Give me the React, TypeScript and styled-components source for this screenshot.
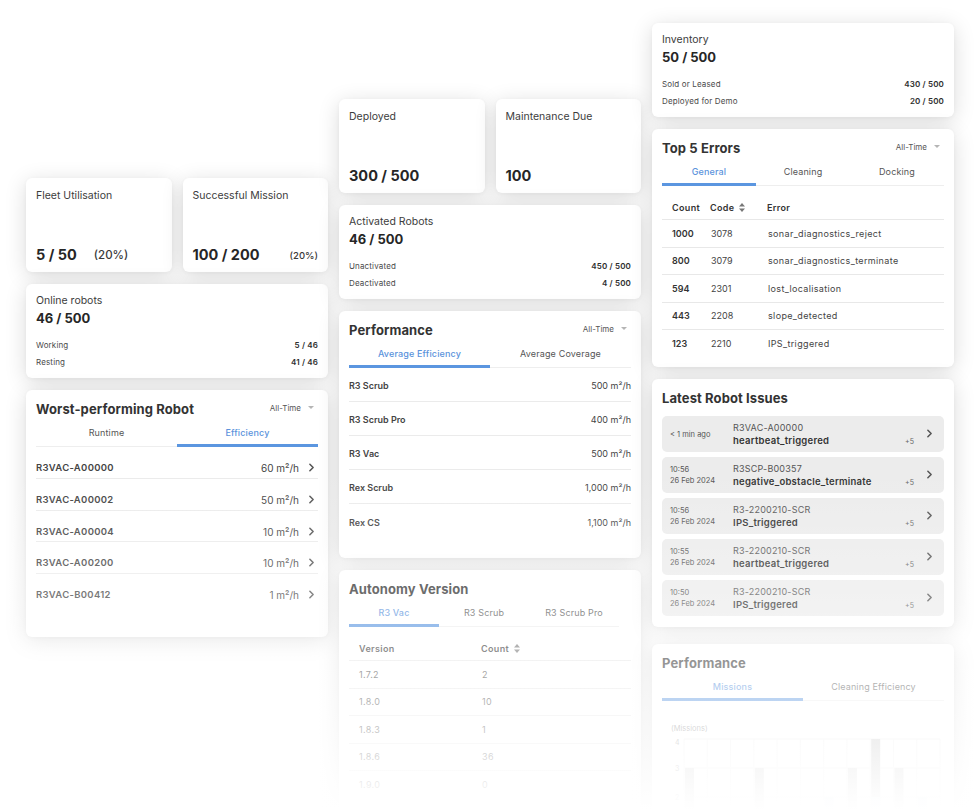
import React from "react";
import styled, { createGlobalStyle } from "styled-components";
import { ChevronRight } from "lucide-react";

const GlobalStyle = createGlobalStyle`
  html, body { margin: 0; padding: 0; background: #ffffff; }
  body { font-family: "Inter", "Noto Sans", sans-serif; color: #333; -webkit-font-smoothing: antialiased; }
  * { box-sizing: border-box; }
`;

const Page = styled.div`
  position: relative;
  width: 980px;
  height: 810px;
  overflow: hidden;
  display: flex;
  align-items: flex-start;
  gap: 11px;
  padding-left: 26px;
  background: #fff;
`;

const Column = styled.div<{ $top: number }>`
  width: 302px;
  flex: none;
  display: flex;
  flex-direction: column;
  gap: 12px;
  padding-top: ${(p) => p.$top}px;
`;

const Card = styled.div<{ $h?: number; $mt?: number }>`
  background: #fff;
  border-radius: 6px;
  box-shadow: 0 4px 22px rgba(0, 0, 0, 0.14), 0 1px 4px rgba(0, 0, 0, 0.04);
  height: ${(p) => (p.$h ? `${p.$h}px` : "auto")};
  margin-top: ${(p) => p.$mt ?? 0}px;
  padding: 10px;
  display: flex;
  flex-direction: column;
  overflow: hidden;
`;

const HalfRow = styled.div`
  display: grid;
  grid-template-columns: 1fr 1fr;
  gap: 11px;
`;

/* ---------- stat cards ---------- */
const StatCard = styled(Card)`
  height: 94px;
  justify-content: space-between;
  padding: 11px 10px 7px;
`;

const Label = styled.div`
  font-size: 10.5px;
  line-height: 14px;
  color: #3c3c3c;
`;

const StatValueRow = styled.div<{ $spread?: boolean }>`
  display: flex;
  align-items: center;
  justify-content: ${(p) => (p.$spread ? "space-between" : "flex-start")};
  gap: 17px;
`;

const BigValue = styled.div`
  font-size: 14.5px;
  line-height: 20px;
  font-weight: 700;
  color: #262626;
`;

const Percent = styled.span<{ $small?: boolean }>`
  font-size: ${(p) => (p.$small ? 9.5 : 11.5)}px;
  font-weight: 500;
  color: #3a3a3a;
`;

/* ---------- summary cards ---------- */
const SummaryCard = styled(Card)`
  height: 94px;
  padding: 10px 10px 8px;
`;

const SummaryValue = styled.div`
  font-size: 13px;
  line-height: 16px;
  font-weight: 700;
  color: #262626;
  margin-top: 2px;
  margin-bottom: 10px;
`;

const DetailRow = styled.div`
  display: flex;
  justify-content: space-between;
  align-items: center;
  height: 18.5px;
  font-size: 8px;
  letter-spacing: 0.15px;
  color: #4a4a4a;
  b {
    font-size: 8px;
    font-weight: 600;
    color: #2e2e2e;
  }
`;

/* ---------- panels ---------- */
const PanelHeader = styled.div`
  display: flex;
  justify-content: space-between;
  align-items: center;
  height: 16px;
  margin-top: 1px;
`;

const Title = styled.div`
  font-size: 13px;
  font-weight: 700;
  color: #333;
  letter-spacing: 0.1px;
`;

const RangeSelect = styled.div`
  display: flex;
  align-items: center;
  gap: 7px;
  font-size: 8px;
  color: #555;
  margin-right: 4px;
  margin-top: -3px;
  &::after {
    content: "";
    border-left: 3px solid transparent;
    border-right: 3px solid transparent;
    border-top: 3px solid #b5b5b5;
  }
`;

const TabBar = styled.div<{ $w?: number }>`
  display: flex;
  width: ${(p) => (p.$w ? `${p.$w}px` : "100%")};
  border-bottom: 1px solid #eeeeee;
  margin-top: 8px;
`;

const Tab = styled.div<{ $active?: boolean }>`
  flex: 1;
  text-align: center;
  font-size: 9px;
  letter-spacing: 0.15px;
  height: 22px;
  line-height: 16px;
  color: ${(p) => (p.$active ? "#5b93dc" : "#555")};
  font-weight: ${(p) => (p.$active ? 500 : 400)};
  border-bottom: 3px solid ${(p) => (p.$active ? "#5b96e0" : "transparent")};
  margin-bottom: -1px;
`;

const RobotRow = styled.div`
  display: flex;
  align-items: flex-start;
  height: 31.8px;
  padding-top: 15px;
  border-bottom: 1px solid #ebebeb;
  color: #444;
  &:last-child { border-bottom: none; }
`;

const RobotName = styled.div`
  flex: 1;
  font-size: 9.5px;
  font-weight: 600;
  line-height: 12px;
  letter-spacing: 0.3px;
`;

const RobotValue = styled.div`
  font-size: 10px;
  line-height: 12px;
  margin-right: 6px;
`;

const Chevron = styled(ChevronRight)`
  flex: none;
  color: #555;
  margin-top: -1px;
`;

const PerfRow = styled.div`
  display: flex;
  justify-content: space-between;
  align-items: center;
  height: 34px;
  padding-top: 2px;
  border-bottom: 1px solid #ebebeb;
  font-size: 9px;
  color: #444;
  &:last-child { border-bottom: none; }
  b { font-weight: 600; }
`;

const Table = styled.table`
  width: 100%;
  border-collapse: collapse;
  font-size: 9px;
  letter-spacing: 0.35px;
  color: #444;
  th {
    text-align: left;
    font-weight: 600;
    color: #333;
    height: 33px;
    padding: 16px 0 6px;
    vertical-align: top;
    border-bottom: 1px solid #e8e8e8;
  }
  td {
    height: 27.5px;
    border-bottom: 1px solid #e8e8e8;
    vertical-align: middle;
  }
  tr:last-child td { border-bottom: none; }
  th:first-child, td:first-child { padding-left: 10px; }
`;

const SortIcon = () => (
  <svg width="6" height="9" viewBox="0 0 6 9" style={{ marginLeft: 5, verticalAlign: "-1px" }}>
    <path d="M3 0 L6 3.5 H0 Z" fill="#777" />
    <path d="M3 9 L6 5.5 H0 Z" fill="#777" />
  </svg>
);

/* ---------- issues ---------- */
const IssueList = styled.div`
  display: flex;
  flex-direction: column;
  gap: 5px;
  margin-top: 10px;
`;

const IssueItem = styled.div`
  display: flex;
  align-items: center;
  height: 36px;
  border-radius: 5px;
  background: #ececec;
  padding: 0 8px;
`;

const IssueTime = styled.div`
  width: 63px;
  font-size: 7.5px;
  line-height: 11px;
  color: #555;
  flex: none;
`;

const IssueBody = styled.div`
  flex: 1;
  display: flex;
  flex-direction: column;
  gap: 2px;
`;

const IssueId = styled.div`
  font-size: 9px;
  letter-spacing: 0.2px;
  color: #555;
  line-height: 11px;
`;

const IssueError = styled.div`
  font-size: 9.5px;
  font-weight: 600;
  letter-spacing: 0.25px;
  color: #333;
  line-height: 12px;
`;

const Extra = styled.div`
  font-size: 7px;
  color: #666;
  margin-top: 14px;
  margin-right: 9px;
`;

const ChartWrap = styled.div`
  margin-top: 18px;
`;

const Fade = styled.div`
  position: absolute;
  left: 0;
  right: 0;
  top: 470px;
  bottom: 0;
  pointer-events: none;
  background: linear-gradient(
    to bottom,
    rgba(255, 255, 255, 0) 0px,
    rgba(255, 255, 255, 0.28) 120px,
    rgba(255, 255, 255, 0.5) 200px,
    rgba(255, 255, 255, 0.72) 270px,
    rgba(255, 255, 255, 0.93) 320px,
    rgba(255, 255, 255, 1) 340px
  );
`;

const worst = [
  ["R3VAC-A00000", "60"],
  ["R3VAC-A00002", "50"],
  ["R3VAC-A00004", "10"],
  ["R3VAC-A00200", "10"],
  ["R3VAC-B00412", "1"],
];

const perf = [
  ["R3 Scrub", "500"],
  ["R3 Scrub Pro", "400"],
  ["R3 Vac", "500"],
  ["Rex Scrub", "1,000"],
  ["Rex CS", "1,100"],
];

const errors = [
  ["1000", "3078", "sonar_diagnostics_reject"],
  ["800", "3079", "sonar_diagnostics_terminate"],
  ["594", "2301", "lost_localisation"],
  ["443", "2208", "slope_detected"],
  ["123", "2210", "IPS_triggered"],
];

const versions = [
  ["1.7.2", "2"],
  ["1.8.0", "10"],
  ["1.8.3", "1"],
  ["1.8.6", "36"],
  ["1.9.0", "0"],
];

const issues = [
  { t: ["< 1 min ago"], id: "R3VAC-A00000", e: "heartbeat_triggered" },
  { t: ["10:56", "26 Feb 2024"], id: "R3SCP-B00357", e: "negative_obstacle_terminate" },
  { t: ["10:56", "26 Feb 2024"], id: "R3-2200210-SCR", e: "IPS_triggered" },
  { t: ["10:55", "26 Feb 2024"], id: "R3-2200210-SCR", e: "heartbeat_triggered" },
  { t: ["10:50", "26 Feb 2024"], id: "R3-2200210-SCR", e: "IPS_triggered" },
];

const MissionChart = () => {
  const x0 = 22;
  const x1 = 278;
  const cols = 11;
  const step = (x1 - x0) / cols;
  const bars: [number, number, string][] = [
    [0, 769, "#d2d2d2"],
    [3, 798, "#d8e3f2"],
    [3, 769, "#d2d2d2"],
    [6, 798, "#d8e3f2"],
    [7, 769, "#d2d2d2"],
    [8, 740, "#c8c8c8"],
    [8, 798, "#d8e3f2"],
    [9, 769, "#d2d2d2"],
    [10, 798, "#d8e3f2"],
  ];
  return (
    <svg width="282" height="90" viewBox="0 720 282 90">
      <text x="9" y="732" fontSize="7.5" fill="#888" fontFamily="Inter, sans-serif">(Missions)</text>
      <text x="13" y="746" fontSize="7" fill="#999" fontFamily="Inter, sans-serif">4</text>
      <text x="13" y="772" fontSize="7" fill="#999" fontFamily="Inter, sans-serif">3</text>
      <text x="13" y="801" fontSize="7" fill="#999" fontFamily="Inter, sans-serif">2</text>
      {[740, 769, 798].map((y) => (
        <line key={y} x1={x0} x2={x1} y1={y} y2={y} stroke="#eaeaea" strokeWidth="1" />
      ))}
      {Array.from({ length: cols + 1 }).map((_, i) => (
        <line key={i} x1={x0 + i * step} x2={x0 + i * step} y1={740} y2={810} stroke="#f0f0f0" strokeWidth="1" />
      ))}
      {bars.map(([c, y, col], i) => (
        <rect key={i} x={x0 + c * step + 1} y={y} width={9} height={810 - y} fill={col} />
      ))}
    </svg>
  );
};

export default function App() {
  return (
    <>
      <GlobalStyle />
      <Page>
        <Column $top={178}>
          <HalfRow>
            <StatCard>
              <Label>Fleet Utilisation</Label>
              <StatValueRow>
                <BigValue>5 / 50</BigValue>
                <Percent>(20%)</Percent>
              </StatValueRow>
            </StatCard>
            <StatCard>
              <Label>Successful Mission</Label>
              <StatValueRow $spread>
                <BigValue>100 / 200</BigValue>
                <Percent $small>(20%)</Percent>
              </StatValueRow>
            </StatCard>
          </HalfRow>
          <SummaryCard>
            <Label>Online robots</Label>
            <SummaryValue>46 / 500</SummaryValue>
            <DetailRow>
              <span>Working</span>
              <b>5 / 46</b>
            </DetailRow>
            <DetailRow>
              <span>Resting</span>
              <b>41 / 46</b>
            </DetailRow>
          </SummaryCard>
          <Card $h={247}>
            <PanelHeader>
              <Title>Worst-performing Robot</Title>
              <RangeSelect>All-Time</RangeSelect>
            </PanelHeader>
            <TabBar>
              <Tab>Runtime</Tab>
              <Tab $active>Efficiency</Tab>
            </TabBar>
            {worst.map(([n, v]) => (
              <RobotRow key={n}>
                <RobotName>{n}</RobotName>
                <RobotValue>{v} m²/h</RobotValue>
                <Chevron size={13} strokeWidth={2.8} />
              </RobotRow>
            ))}
          </Card>
        </Column>

        <Column $top={99}>
          <HalfRow>
            <StatCard>
              <Label>Deployed</Label>
              <BigValue>300 / 500</BigValue>
            </StatCard>
            <StatCard>
              <Label>Maintenance Due</Label>
              <BigValue>100</BigValue>
            </StatCard>
          </HalfRow>
          <SummaryCard>
            <Label>Activated Robots</Label>
            <SummaryValue>46 / 500</SummaryValue>
            <DetailRow>
              <span>Unactivated</span>
              <b>450 / 500</b>
            </DetailRow>
            <DetailRow>
              <span>Deactivated</span>
              <b>4 / 500</b>
            </DetailRow>
          </SummaryCard>
          <Card $h={247}>
            <PanelHeader>
              <Title>Performance</Title>
              <RangeSelect>All-Time</RangeSelect>
            </PanelHeader>
            <TabBar>
              <Tab $active>Average Efficiency</Tab>
              <Tab>Average Coverage</Tab>
            </TabBar>
            {perf.map(([n, v]) => (
              <PerfRow key={n}>
                <b>{n}</b>
                <span>{v} m²/h</span>
              </PerfRow>
            ))}
          </Card>
          <Card $h={260}>
            <PanelHeader>
              <Title>Autonomy Version</Title>
            </PanelHeader>
            <TabBar $w={270}>
              <Tab $active>R3 Vac</Tab>
              <Tab>R3 Scrub</Tab>
              <Tab>R3 Scrub Pro</Tab>
            </TabBar>
            <Table>
              <colgroup>
                <col style={{ width: 132 }} />
                <col />
              </colgroup>
              <thead>
                <tr>
                  <th>Version</th>
                  <th>
                    Count
                    <SortIcon />
                  </th>
                </tr>
              </thead>
              <tbody>
                {versions.map(([v, c]) => (
                  <tr key={v}>
                    <td>{v}</td>
                    <td>{c}</td>
                  </tr>
                ))}
              </tbody>
            </Table>
          </Card>
        </Column>

        <Column $top={23}>
          <SummaryCard>
            <Label>Inventory</Label>
            <SummaryValue>50 / 500</SummaryValue>
            <DetailRow>
              <span>Sold or Leased</span>
              <b>430 / 500</b>
            </DetailRow>
            <DetailRow>
              <span>Deployed for Demo</span>
              <b>20 / 500</b>
            </DetailRow>
          </SummaryCard>
          <Card $h={238}>
            <PanelHeader>
              <Title>Top 5 Errors</Title>
              <RangeSelect>All-Time</RangeSelect>
            </PanelHeader>
            <TabBar>
              <Tab $active>General</Tab>
              <Tab>Cleaning</Tab>
              <Tab>Docking</Tab>
            </TabBar>
            <Table>
              <colgroup>
                <col style={{ width: 48 }} />
                <col style={{ width: 57 }} />
                <col />
              </colgroup>
              <thead>
                <tr>
                  <th>Count</th>
                  <th>
                    Code
                    <SortIcon />
                  </th>
                  <th>Error</th>
                </tr>
              </thead>
              <tbody>
                {errors.map(([c, code, e]) => (
                  <tr key={code}>
                    <td style={{ fontWeight: 600, color: "#333", letterSpacing: 0 }}>{c}</td>
                    <td style={{ letterSpacing: 0 }}>{code}</td>
                    <td>{e}</td>
                  </tr>
                ))}
              </tbody>
            </Table>
          </Card>
          <Card $h={248}>
            <PanelHeader>
              <Title>Latest Robot Issues</Title>
            </PanelHeader>
            <IssueList>
              {issues.map((it, i) => (
                <IssueItem key={i}>
                  <IssueTime>
                    {it.t.map((l) => (
                      <div key={l}>{l}</div>
                    ))}
                  </IssueTime>
                  <IssueBody>
                    <IssueId>{it.id}</IssueId>
                    <IssueError>{it.e}</IssueError>
                  </IssueBody>
                  <Extra>+5</Extra>
                  <Chevron size={13} strokeWidth={2.8} />
                </IssueItem>
              ))}
            </IssueList>
          </Card>
          <Card $h={260} $mt={5}>
            <PanelHeader>
              <Title>Performance</Title>
            </PanelHeader>
            <TabBar>
              <Tab $active>Missions</Tab>
              <Tab>Cleaning Efficiency</Tab>
            </TabBar>
            <ChartWrap>
              <MissionChart />
            </ChartWrap>
          </Card>
        </Column>
        <Fade />
      </Page>
    </>
  );
}
